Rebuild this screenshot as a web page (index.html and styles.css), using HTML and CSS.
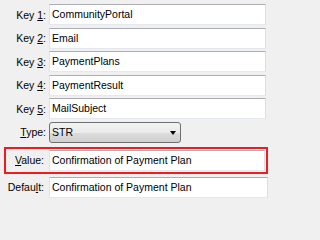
FILE: index.html
```html
<!DOCTYPE html>
<html>
<head>
<meta charset="utf-8">
<link rel="stylesheet" href="styles.css">
</head>
<body>
<div class="form">
  <div class="row"><label class="lbl">Key <u>1</u>:</label><div class="input">CommunityPortal</div></div>
  <div class="row"><label class="lbl">Key <u>2</u>:</label><div class="input">Email</div></div>
  <div class="row"><label class="lbl">Key <u>3</u>:</label><div class="input">PaymentPlans</div></div>
  <div class="row"><label class="lbl">Key <u>4</u>:</label><div class="input">PaymentResult</div></div>
  <div class="row"><label class="lbl">Key <u>5</u>:</label><div class="input">MailSubject</div></div>
  <div class="row"><label class="lbl"><u>T</u>ype:</label><div class="select"><span class="sel-text">STR</span><span class="arrow"></span></div></div>
  <div class="row highlight"><label class="lbl lbl-in"><u>V</u>alue:</label><div class="input input-in">Confirmation of Payment Plan</div></div>
  <div class="row row-default"><label class="lbl lbl-def">Defau<u>l</u>t:</label><div class="input input-def">Confirmation of Payment Plan</div></div>
</div>
</body>
</html>
```

FILE: styles.css
```css
html, body {
  margin: 0;
  padding: 0;
  background: #f0f0f0;
}
body {
  width: 270px;
  height: 201px;
  overflow: hidden;
  font-family: "Liberation Sans", Arial, sans-serif;
  font-size: 10.5px;
  color: #000;
}
.form {
  display: flex;
  flex-direction: column;
  gap: 2.5px;
  padding-top: 4px;
}
.row {
  display: flex;
  align-items: center;
  height: 21px;
  margin-right: 4px;
}
.lbl {
  width: 49px;
  flex: none;
  box-sizing: border-box;
  text-align: right;
  padding-right: 3px;
  white-space: nowrap;
}
.input {
  flex: 1;
  height: 21px;
  box-sizing: border-box;
  background: #fff;
  border: 1px solid;
  border-color: #abadb3 #dbdfe6 #e3e9ef #e2e3ea;
  padding-left: 2px;
  line-height: 19px;
  white-space: nowrap;
  overflow: hidden;
}
.select {
  width: 132px;
  height: 21px;
  box-sizing: border-box;
  border: 1px solid #707070;
  border-radius: 3px;
  background: linear-gradient(#f2f2f2 0%, #ebebeb 50%, #dddddd 50%, #cfcfcf 100%);
  display: flex;
  align-items: center;
  justify-content: space-between;
  padding: 0 4px 0 2px;
}
.arrow {
  width: 0;
  height: 0;
  border-left: 3.5px solid transparent;
  border-right: 3.5px solid transparent;
  border-top: 4px solid #000;
  margin-top: 1px;
}
.highlight {
  height: 27px;
  box-sizing: border-box;
  margin-top: 1.5px;
  margin-left: 4px;
  margin-right: 2px;
  border: 2px solid #ee1c1c;
  padding: 1px 1px 1px 0;
}
.lbl-in {
  width: 43px;
  padding-right: 5px;
}
.input-in {
  height: 21px;
}
.row-default {
  margin-top: 0.5px;
  margin-right: 2px;
}
.lbl-def {
  padding-right: 5px;
}
u {
  text-decoration: underline;
  text-underline-offset: 1px;
}
```
